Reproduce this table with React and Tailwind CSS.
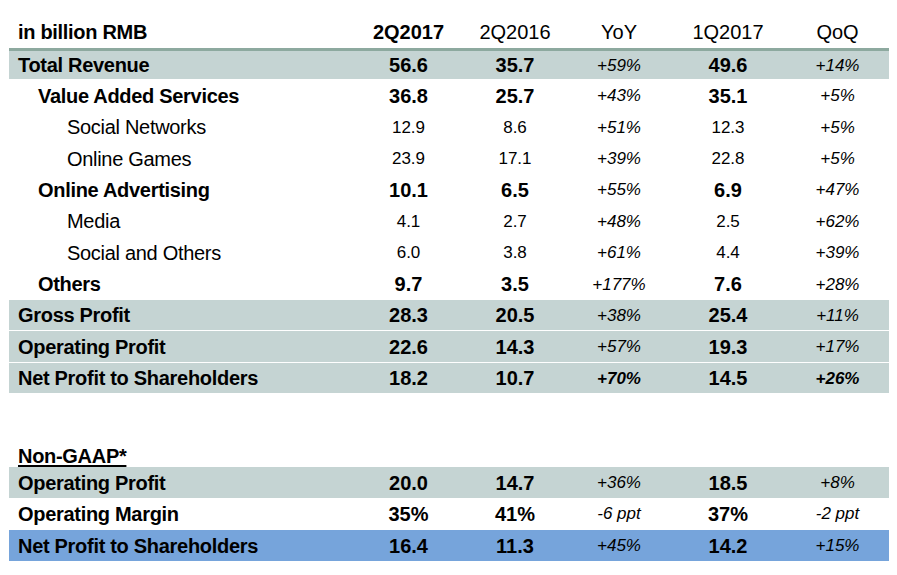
import React from "react";

const G = "bg-[#c5d4d3]";
const B = "bg-[#76a4db]";

const rows = [
  { l: "Total Revenue", lvl: 0, v: ["56.6", "35.7", "+59%", "49.6", "+14%"], bold: true, bg: G, top: true },
  { l: "Value Added Services", lvl: 1, v: ["36.8", "25.7", "+43%", "35.1", "+5%"], bold: true },
  { l: "Social Networks", lvl: 2, v: ["12.9", "8.6", "+51%", "12.3", "+5%"] },
  { l: "Online Games", lvl: 2, v: ["23.9", "17.1", "+39%", "22.8", "+5%"] },
  { l: "Online Advertising", lvl: 1, v: ["10.1", "6.5", "+55%", "6.9", "+47%"], bold: true },
  { l: "Media", lvl: 2, v: ["4.1", "2.7", "+48%", "2.5", "+62%"] },
  { l: "Social and Others", lvl: 2, v: ["6.0", "3.8", "+61%", "4.4", "+39%"] },
  { l: "Others", lvl: 1, v: ["9.7", "3.5", "+177%", "7.6", "+28%"], bold: true },
  { l: "Gross Profit", lvl: 0, v: ["28.3", "20.5", "+38%", "25.4", "+11%"], bold: true, bg: G },
  { l: "Operating Profit", lvl: 0, v: ["22.6", "14.3", "+57%", "19.3", "+17%"], bold: true, bg: G, sep: true },
  { l: "Net Profit to Shareholders", lvl: 0, v: ["18.2", "10.7", "+70%", "14.5", "+26%"], bold: true, bg: G, sep: true, boldPct: true },
];

const ngRows = [
  { l: "Operating Profit", lvl: 0, v: ["20.0", "14.7", "+36%", "18.5", "+8%"], bold: true, bg: G },
  { l: "Operating Margin", lvl: 0, v: ["35%", "41%", "-6 ppt", "37%", "-2 ppt"], bold: true },
  { l: "Net Profit to Shareholders", lvl: 0, v: ["16.4", "11.3", "+45%", "14.2", "+15%"], bold: true, bg: B, sep: true },
];

const indent = ["pl-[9px]", "pl-[29px]", "pl-[58px]"];
const cols = "grid grid-cols-[346px_107px_106px_102px_116px_103px] w-[880px]";

function Row({ r, h }) {
  const num = r.bold ? "font-bold text-[20px]" : "text-[17px]";
  const pct = r.boldPct ? "italic font-bold text-[17px]" : "italic text-[17px]";
  return (
    <div
      className={`${cols} items-center leading-none ${r.bg || ""} ${h} ${r.sep ? "mt-px" : ""} ${
        r.top ? "border-t-[3px] border-[#8da99f]" : ""
      }`}
    >
      <div className={`${indent[r.lvl]} text-[20px] tracking-[-0.3px] ${r.bold ? "font-bold" : ""}`}>{r.l}</div>
      <div className={`text-center ${num}`}>{r.v[0]}</div>
      <div className={`text-center ${num}`}>{r.v[1]}</div>
      <div className={`text-center ${pct}`}>{r.v[2]}</div>
      <div className={`text-center ${num}`}>{r.v[3]}</div>
      <div className={`text-center ${pct}`}>{r.v[4]}</div>
    </div>
  );
}

export default function App() {
  return (
    <div
      className="w-[897px] h-[575px] bg-white text-black pl-[9px] overflow-hidden"
      style={{ fontFamily: '"Liberation Sans", Arial, sans-serif' }}
    >
      <div className={`${cols} h-[48px] items-center pt-[16px] text-[20px] leading-none`}>
        <div className="pl-[9px] font-bold tracking-[-0.3px]">in billion RMB</div>
        <div className="text-center font-bold">2Q2017</div>
        <div className="text-center">2Q2016</div>
        <div className="text-center">YoY</div>
        <div className="text-center">1Q2017</div>
        <div className="text-center">QoQ</div>
      </div>
      <Row r={rows[0]} h="h-[31px]" />
      <div className="mt-px">
        {rows.slice(1, 8).map((r) => (
          <Row key={r.l} r={r} h="h-[31.43px]" />
        ))}
      </div>
      {rows.slice(8).map((r) => (
        <Row key={r.l} r={r} h="h-[30.5px]" />
      ))}
      <div className="h-[44px]" />
      <div className="h-[30px] flex items-center pt-[8px] pl-[9px] text-[20px] leading-none font-bold underline underline-offset-[2px] tracking-[-0.3px]">
        Non-GAAP*
      </div>
      {ngRows.map((r) => (
        <Row key={r.l + "ng"} r={r} h="h-[31px]" />
      ))}
    </div>
  );
}
